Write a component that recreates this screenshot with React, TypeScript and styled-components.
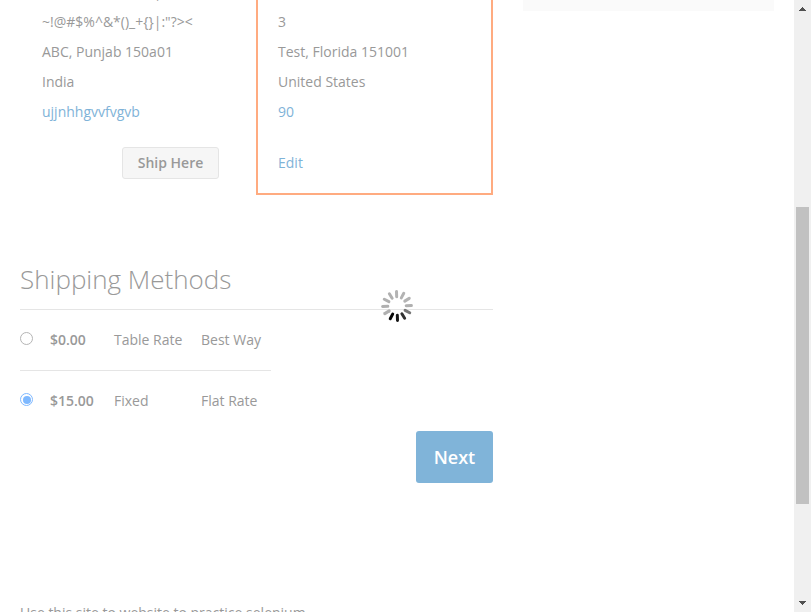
import React from "react";
import styled, { createGlobalStyle } from "styled-components";

const GlobalStyle = createGlobalStyle`
  *, *::before, *::after { box-sizing: border-box; }
  body { margin: 0; background: #fff; overflow: hidden; }
`;

const Page = styled.div`
  position: relative;
  display: flex;
  width: 811px;
  height: 612px;
  overflow: hidden;
  background: #fff;
  color: #999;
  font: 400 14px/30px "Open Sans", "Noto Sans", sans-serif;
`;

const Main = styled.main`
  flex: none;
  width: 473px;
  margin-left: 20px;
`;

const Addresses = styled.section`
  display: flex;
  height: 218px;
  margin-top: -23px;
`;

const Address = styled.article<{ $selected?: boolean }>`
  width: ${(p) => (p.$selected ? 237 : 236)}px;
  padding: 0 20px;
  border: 2px solid ${(p) => (p.$selected ? "#ffab80" : "transparent")};
  border-top: 0;
`;

const Line = styled.div`
  height: 30px;
  white-space: nowrap;
`;

const Link = styled.a`
  color: #7fb3d8;
  text-decoration: none;
`;

const Actions = styled.div<{ $end?: boolean }>`
  display: flex;
  justify-content: ${(p) => (p.$end ? "flex-end" : "flex-start")};
  margin-top: 20px;
  padding-right: 15px;
  line-height: 32px;
`;

const ShipButton = styled.button`
  width: 97px;
  height: 32px;
  padding: 0;
  border: 1px solid #e5e5e5;
  border-radius: 3px;
  background: #f6f6f6;
  color: #999;
  font: 600 14px/16px "Open Sans", "Noto Sans", sans-serif;
`;

const Title = styled.h2`
  height: 49px;
  margin: 66px 0 0;
  border-bottom: 1px solid #e5e5e5;
  font-size: 26px;
  font-weight: 300;
  line-height: 36px;
`;

const Methods = styled.div`
  width: 251px;
`;

const Method = styled.label`
  display: grid;
  grid-template-columns: 30px 64px 87px 1fr;
  height: 60px;
  line-height: 60px;
  white-space: nowrap;

  & + & {
    height: 61px;
    border-top: 1px solid #e5e5e5;
  }
`;

const Price = styled.span`
  font-weight: 600;
`;

const Radio = styled.span<{ $checked?: boolean }>`
  display: grid;
  place-items: center;
  width: 13px;
  height: 13px;
  margin-top: 22px;
  border: 1px solid ${(p) => (p.$checked ? "#7fb9ff" : "#b5b5b5")};
  border-radius: 50%;

  &::after {
    content: "";
    width: 8px;
    height: 8px;
    border-radius: 50%;
    background: ${(p) => (p.$checked ? "#7fb9ff" : "transparent")};
  }
`;

const NextButton = styled.button`
  display: block;
  width: 77px;
  height: 52px;
  margin: 0 0 0 auto;
  padding: 0;
  border: 0;
  border-radius: 3px;
  background: #80b4d9;
  color: #fff;
  font: 600 18px/22px "Open Sans", "Noto Sans", sans-serif;
`;

const Footnote = styled.p`
  margin: 115px 0 0;
`;

const Summary = styled.aside`
  flex: none;
  width: 251px;
  height: 11px;
  margin-left: 30px;
  background: #fafafa;
`;

const Scrollbar = styled.div`
  display: flex;
  flex-direction: column;
  align-items: center;
  flex: none;
  width: 17px;
  height: 612px;
  margin-left: auto;
  background: #f0f0f0;
`;

const Thumb = styled.div`
  width: 13px;
  height: 297px;
  margin-top: 190px;
  margin-bottom: 91px;
  background: #c1c1c1;
`;

const Arrow = styled.svg`
  display: block;
  flex: none;
  width: 17px;
  height: 17px;
`;

const Spinner = styled.svg`
  position: absolute;
  left: 379px;
  top: 288px;
  width: 36px;
  height: 36px;
`;

const symbols = `~!@#$%^&*()_+{}|:"?><`;

const spokes = [
  "#b3b3b3", "#b3b3b3", "#b3b3b3", "#b0b0b0", "#777777", "#303030",
  "#181818", "#080808", "#b0b0b0", "#b0b0b0", "#b0b0b0", "#b0b0b0",
];

export default function App() {
  return (
    <>
      <GlobalStyle />
      <Page>
        <Main>
          <Addresses>
            <Address>
              <Line>{symbols}</Line>
              <Line>{symbols}</Line>
              <Line>ABC, Punjab 150a01</Line>
              <Line>India</Line>
              <Line><Link>ujjnhhgvvfvgvb</Link></Line>
              <Actions $end><ShipButton>Ship Here</ShipButton></Actions>
            </Address>
            <Address $selected>
              <Line />
              <Line>3</Line>
              <Line>Test, Florida 151001</Line>
              <Line>United States</Line>
              <Line><Link>90</Link></Line>
              <Actions><Link>Edit</Link></Actions>
            </Address>
          </Addresses>
          <Title>Shipping Methods</Title>
          <Methods>
            <Method>
              <Radio />
              <Price>$0.00</Price>
              <span>Table Rate</span>
              <span>Best Way</span>
            </Method>
            <Method>
              <Radio $checked />
              <Price>$15.00</Price>
              <span>Fixed</span>
              <span>Flat Rate</span>
            </Method>
          </Methods>
          <NextButton>Next</NextButton>
          <Footnote>Use this site to website to practice selenium.</Footnote>
        </Main>
        <Summary />
        <Scrollbar>
          <Arrow viewBox="0 0 17 17" shapeRendering="crispEdges">
            <path d="M5 11v-1h1v-1h1v-1h1v-1h1v1h1v1h1v1h1v1z" fill="#505050" />
          </Arrow>
          <Thumb />
          <Arrow viewBox="0 0 17 17" shapeRendering="crispEdges">
            <path d="M5 6v1h1v1h1v1h1v1h1v-1h1v-1h1v-1h1v-1z" fill="#505050" />
          </Arrow>
        </Scrollbar>
        <Spinner viewBox="-18 -18 36 36">
          {spokes.map((color, i) => (
            <line
              key={i}
              y1="-9.2"
              y2="-14.4"
              stroke={color}
              strokeWidth="3"
              strokeLinecap="round"
              transform={`rotate(${i * 30 - 2})`}
            />
          ))}
        </Spinner>
      </Page>
    </>
  );
}
